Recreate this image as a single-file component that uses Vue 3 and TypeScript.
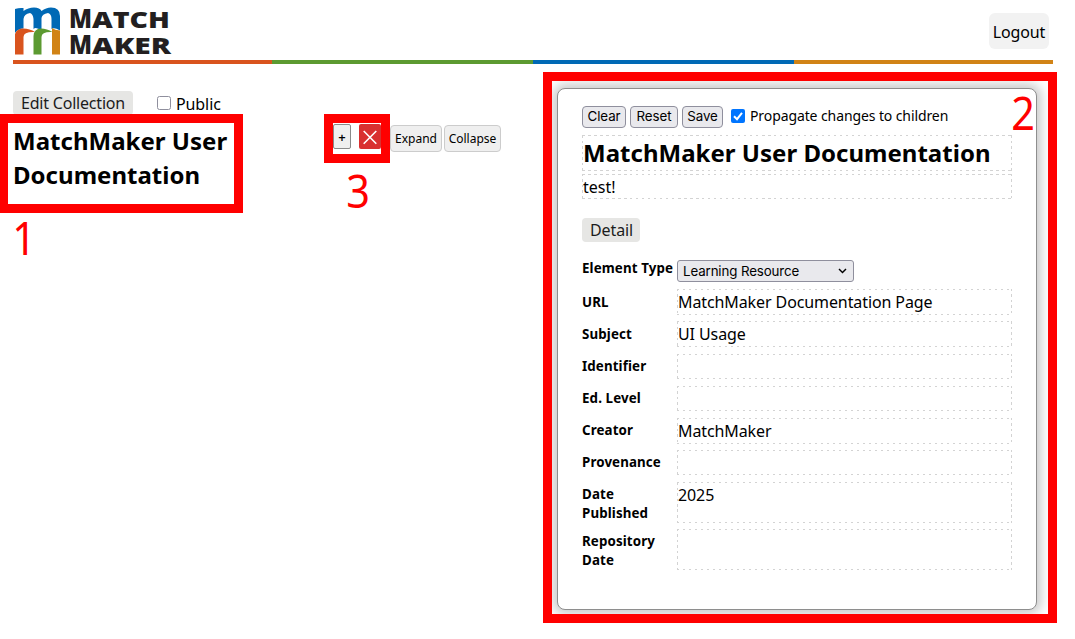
<script setup lang="ts">
interface Field { label: string; value: string; tall?: boolean; select?: boolean }
const fields: Field[] = [
  { label: 'Element Type', value: 'Learning Resource', select: true },
  { label: 'URL', value: 'MatchMaker Documentation Page' },
  { label: 'Subject', value: 'UI Usage' },
  { label: 'Identifier', value: '' },
  { label: 'Ed. Level', value: '' },
  { label: 'Creator', value: 'MatchMaker' },
  { label: 'Provenance', value: '' },
  { label: 'Date Published', value: '2025', tall: true },
  { label: 'Repository Date', value: '', tall: true },
]
</script>

<template>
  <div class="page">
    <header class="header">
      <svg class="logo" width="175" height="60" viewBox="0 -6 175 60">
        <path class="c-blue" d="M2 3Q6 1.5 10.5 2V5Q15 1.5 21 1.5Q27 1.5 28.5 5Q33 1.5 38 1.5Q47 1.5 47 10V24.5Q41 21 38.5 23V13Q38.5 8 35 7Q29 8 28.5 12V25Q23 20 20.5 23V13Q20 8 17 7Q11 8 10.5 13V22.5Q5 22.5 2 27Z" />
        <path class="c-orange" d="M2 48.5V28Q4 22.5 10 22.5Q17 22.5 22 26Q10.5 25.5 10.5 31V48.5Z" />
        <path class="c-green" d="M20.5 48.5V30Q21 22.5 28 22.5Q34 22.5 39.5 26Q28.5 25.5 28.5 31V48.5Z" />
        <path class="c-gold" d="M39 48.5V22Q42 24 47 24.5V48.5Z" />
        <g class="brand">
          <text x="56" y="22" font-size="26.5" textLength="23" lengthAdjust="spacingAndGlyphs">M</text>
          <text x="79" y="22" font-size="23" textLength="78" lengthAdjust="spacingAndGlyphs">ATCH</text>
          <text x="56" y="48" font-size="26.5" textLength="23" lengthAdjust="spacingAndGlyphs">M</text>
          <text x="79" y="48" font-size="23" textLength="79" lengthAdjust="spacingAndGlyphs">AKER</text>
        </g>
      </svg>
      <button class="logout">Logout</button>
    </header>
    <div class="stripe"><i class="s1" /><i class="s2" /><i class="s3" /><i class="s4" /></div>

    <main class="main">
      <section class="left">
        <div class="topline">
          <span class="pill edit">Edit Collection</span>
          <label class="public"><span class="box" />Public</label>
        </div>
        <div class="entry">
          <h1 class="title">MatchMaker User Documentation</h1>
          <div class="tools">
            <button class="plus">+</button>
            <button class="remove"><svg width="22" height="25" viewBox="0 0 22 25"><path d="M4.7 7L17.3 19.7M17.3 7L4.7 19.7" /></svg></button>
            <button class="tool expand">Expand</button>
            <button class="tool collapse">Collapse</button>
          </div>
        </div>
      </section>

      <section class="card">
        <div class="actions">
          <button class="native clear">Clear</button>
          <button class="native reset">Reset</button>
          <button class="native save">Save</button>
          <svg class="check" width="14" height="14" viewBox="0 0 14 14"><rect width="14" height="14" rx="2" /><path d="M3 7.3L6 10.2L11 3.8" /></svg>
          <span class="propagate">Propagate changes to children</span>
        </div>
        <div class="editable heading">MatchMaker User Documentation</div>
        <div class="editable desc">test!</div>
        <span class="pill detail">Detail</span>
        <div class="fields">
          <div v-for="f in fields" :key="f.label" class="row" :class="{ tall: f.tall, first: f.select }">
            <div class="label">{{ f.label }}</div>
            <div v-if="f.select" class="select"><span>{{ f.value }}</span><svg width="9" height="6" viewBox="0 0 9 6"><path d="M1 1L4.5 4.6L8 1" /></svg></div>
            <div v-else class="editable value">{{ f.value }}</div>
          </div>
        </div>
      </section>
    </main>

    <div class="mark m1" /><div class="mark m2" /><div class="mark m3" />
    <span class="num n1">1</span><span class="num n2">2</span><span class="num n3">3</span>
  </div>
</template>

<style>
body { background: #fff; }
</style>
<style scoped>
* { box-sizing: border-box; }
.page { position: relative; width: 1075px; height: 639px; overflow: hidden; font: 16px/22px "Noto Sans", sans-serif; color: #000; background: #fff; }
button { font-family: inherit; color: inherit; margin: 0; padding: 0; white-space: nowrap; }
.header { height: 60px; padding: 0 26px 0 13px; display: flex; justify-content: space-between; align-items: flex-start; }
.logo { display: block; overflow: visible; }
.brand { font-family: "Open Sans", sans-serif; font-weight: 800; fill: #231f20; }
.c-blue { fill: #0069b5; } .c-orange { fill: #d9541e; } .c-green { fill: #5c9a31; } .c-gold { fill: #d18316; }
.logout { margin-top: 13px; width: 60px; height: 36px; border: 0; border-radius: 6px; background: #f2f2f2; font-size: 16px; padding-top: 2px; letter-spacing: -.15px; }
.stripe { width: 1040px; height: 4px; margin-left: 13px; display: grid; grid-template-columns: 259px 261px 261px 259px; }
.s1 { background: #d9541e; } .s2 { background: #5c9a31; } .s3 { background: #0069b5; } .s4 { background: #d18316; }
.main { display: flex; justify-content: space-between; padding: 24px 38px 0 13px; }
.left { width: 488px; padding-top: 3px; }
.topline { display: flex; height: 32px; }
.pill { display: block; height: 24px; border-radius: 4px; background: #e6e6e4; color: #1c1c1c; line-height: 24px; padding: 0 8px; white-space: nowrap; }
.edit { width: 120px; letter-spacing: -.2px; }
.public { display: flex; margin-left: 24px; padding-top: 2px; letter-spacing: -.1px; }
.box { width: 14px; height: 14px; margin: 3px 5px 0 0; border: 1px solid #8f8f9d; border-radius: 2.5px; }
.entry { display: flex; justify-content: space-between; }
.title { margin: 1px 0 0; width: 235px; font-size: 24px; line-height: 34px; font-weight: 700; letter-spacing: .02px; }
.tools { display: flex; align-items: flex-start; }
.plus { width: 18px; height: 25px; margin-top: 1px; border: 1px solid #8a8a8a; border-radius: 2px; background: #efefef; font-size: 13px; line-height: 20px; font-weight: 600; }
.remove { width: 22px; height: 25px; margin: 1px 9px 0 8px; border: 0; border-radius: 2px; background: #d93030; }
.remove svg { display: block; } .remove path { fill: none; stroke: #fff; stroke-width: 1.6; }
.tool { height: 27px; margin-top: 2px; border: 1px solid #ccc; border-radius: 4px; background: #efefef; font-size: 12px; }
.expand { width: 52px; margin-right: 2px; } .collapse { width: 57px; }
.card { width: 480px; height: 522px; border: 1px solid #8e8e8e; border-radius: 8px; padding: 17px 24px 0; box-shadow: 0 0 12px 4px #c7c7c7; background: #fff; }
.actions { display: flex; align-items: flex-start; height: 29px; }
.native { height: 22px; padding-bottom: 2px; border: 1px solid #8f8f9d; border-radius: 4px; background: #e9e9ed; font: 13.33px/18px Inter, sans-serif; letter-spacing: -.1px; margin-right: 4px; }
.clear { width: 44px; } .reset { width: 48px; } .save { width: 41px; }
.check { margin: 3px 5px 0 4px; }
.check rect { fill: #0075ff; } .check path { fill: none; stroke: #fff; stroke-width: 2; }
.propagate { font-size: 14px; line-height: 20px; white-space: nowrap; letter-spacing: -.1px; }
.editable {
  padding: 1px; white-space: nowrap;
  background:
    repeating-linear-gradient(90deg, #d3d3d3 0 2.5px, transparent 2.5px 6px) top / 100% 1px no-repeat,
    repeating-linear-gradient(90deg, #d3d3d3 0 2.5px, transparent 2.5px 6px) bottom / 100% 1px no-repeat,
    repeating-linear-gradient(#d3d3d3 0 2.5px, transparent 2.5px 5.5px) left / 1px 100% no-repeat,
    repeating-linear-gradient(#d3d3d3 0 2.5px, transparent 2.5px 5.5px) right / 1px 100% no-repeat;
}
.heading { height: 36px; font-size: 24px; line-height: 34px; font-weight: 700; margin-bottom: 3px; letter-spacing: .02px; }
.desc { height: 25px; line-height: 24px; }
.detail { width: 58px; margin-top: 19px; letter-spacing: -.1px; }
.fields { display: flex; flex-direction: column; gap: 7.1px; margin-top: 18px; }
.row { display: grid; grid-template-columns: 95px 1fr; height: 25px; }
.row.first { height: 22px; margin-bottom: .3px; } .row.tall { height: 40px; }
.label { font-size: 13.33px; line-height: 19px; font-weight: 700; padding-top: 3.2px; letter-spacing: .12px; }
.first .label { padding-top: 0; margin-top: -1.5px; white-space: nowrap; }
.value { line-height: 24px; letter-spacing: -.1px; }
.select { display: flex; justify-content: space-between; align-items: center; width: 177px; height: 22px; border: 1px solid #8f8f9d; border-radius: 3px; background: #e9e9ed; padding: 0 6px 0 5px; font: 13.33px/18px Inter, sans-serif; letter-spacing: -.13px; }
.select path { fill: none; stroke: #000; stroke-width: 1.4; }
/* Callout frames and numbers lie over the page */
.mark { position: absolute; border: 9px solid #f00; }
.m1 { left: -1px; top: 114px; width: 244px; height: 99px; }
.m2 { left: 543px; top: 72px; width: 514px; height: 551px; }
.m3 { left: 324px; top: 114px; width: 66px; height: 49px; }
.num { position: absolute; color: #f00; font-size: 46px; line-height: 50px; transform: scaleX(.9); }
.n1 { left: 11px; top: 212px; } .n2 { left: 1010px; top: 87px; } .n3 { left: 345px; top: 165px; }
</style>
